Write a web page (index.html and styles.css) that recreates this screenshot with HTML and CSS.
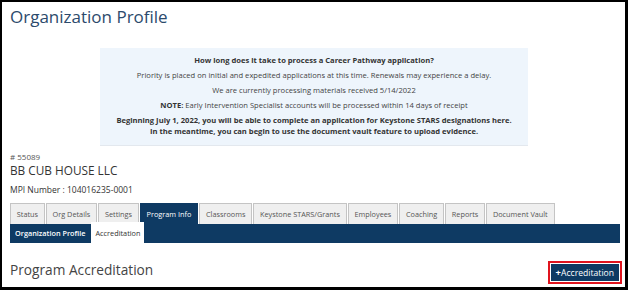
FILE: index.html
```html
<!DOCTYPE html>
<html>
<head>
	<meta charset="utf-8">
	<title>Organization Profile</title>
	<link rel="stylesheet" href="styles.css">
</head>
<body>
	<div class="frame">
		<h1 class="page-title">Organization Profile</h1>

		<div class="notice">
			<p class="strong">How long does it take to process a Career Pathway application?</p>
			<p>Priority is placed on initial and expedited applications at this time. Renewals may experience a delay.</p>
			<p>We are currently processing materials received 5/14/2022</p>
			<p><b>NOTE:</b> Early Intervention Specialist accounts will be processed within 14 days of receipt</p>
			<p class="strong">Beginning July 1, 2022, you will be able to complete an application for Keystone STARS designations here.<br>In the meantime, you can begin to use the document vault feature to upload evidence.</p>
		</div>

		<div class="org">
			<div class="org-id"># 55089</div>
			<div class="org-name">BB CUB HOUSE LLC</div>
			<div class="org-mpi">MPI Number : 104016235-0001</div>
		</div>

		<ul class="tabs">
			<li>Status</li>
			<li>Org Details</li>
			<li>Settings</li>
			<li class="active">Program Info</li>
			<li>Classrooms</li>
			<li>Keystone STARS/Grants</li>
			<li>Employees</li>
			<li>Coaching</li>
			<li>Reports</li>
			<li>Document Vault</li>
		</ul>
		<div class="subnav">
			<span class="subnav-item">Organization Profile</span>
			<span class="subnav-item active">Accreditation</span>
		</div>

		<div class="section-head">
			<h2>Program Accreditation</h2>
			<button class="add-btn"><b>+</b>Accreditation</button>
		</div>
	</div>
</body>
</html>
```

FILE: styles.css
```css
html, body {
	margin: 0;
	padding: 0;
	background: #fff;
	font-family: 'Open Sans', 'Liberation Sans', sans-serif;
	color: #333;
}
.frame {
	width: 628px;
	height: 290px;
	box-sizing: border-box;
	border: 2px solid #000;
	border-right-width: 3px;
	border-bottom-width: 3px;
	padding: 0 5px 0 8px;
	overflow: hidden;
}
.page-title {
	margin: 0;
	padding-top: 4px;
	font-size: 17px;
	line-height: 22px;
	font-weight: 400;
	color: #2c4a6c;
}

/* notice box */
.notice {
	width: 428px;
	box-sizing: border-box;
	margin: 20px 0 0 90px;
	padding: 7px 4px 8px;
	background: #eef5fc;
	border-bottom: 1px solid #e3e8ee;
	text-align: center;
	font-size: 7.6px;
	line-height: 11px;
	color: #444;
}
.notice p {
	margin: 0 0 4px;
}
.notice p:last-child {
	margin-bottom: 0;
}
.notice .strong, .notice b {
	font-weight: 700;
	color: #333;
}

/* organization */
.org-id {
	margin-top: 5px;
	font-size: 8px;
	line-height: 11px;
	color: #555;
}
.org-name {
	font-size: 11.8px;
	line-height: 16px;
	color: #333;
}
.org-mpi {
	margin-top: 7px;
	font-size: 8.5px;
	line-height: 10px;
	color: #333;
}

/* tabs */
.tabs {
	display: flex;
	gap: 1px;
	list-style: none;
	margin: 8px 0 0;
	padding: 0;
}
.tabs li {
	height: 21px;
	box-sizing: border-box;
	padding: 0 5.8px;
	border: 1px solid #c4c4c4;
	border-bottom: none;
	background: #efefef;
	font-size: 7.3px;
	line-height: 20px;
	color: #555;
}
.tabs li.active {
	background: #0e3a63;
	border-color: #0e3a63;
	color: #fff;
}
.subnav {
	display: flex;
	height: 19px;
	padding-left: 2px;
	gap: 3px;
	background: #0e3a63;
}
.subnav-item {
	padding: 0 3px;
	font-size: 7.3px;
	font-weight: 600;
	line-height: 19px;
	color: #fff;
}
.subnav-item.active {
	margin-top: -2px;
	height: 21px;
	line-height: 23px;
	padding: 0 4px;
	background: #fff;
	font-weight: 400;
	color: #333;
}

/* section */
.section-head {
	display: flex;
	justify-content: space-between;
	align-items: flex-end;
	margin-top: 17px;
}
.section-head h2 {
	margin: 0;
	font-size: 13.7px;
	line-height: 20px;
	font-weight: 400;
	color: #444;
}
.add-btn {
	height: 17px;
	margin: 0 1px -1px 0;
	padding: 0 5px;
	border: none;
	background: #0e3a63;
	color: #fff;
	font-family: inherit;
	font-size: 8.6px;
	line-height: 17px;
	outline: 2px solid #e0141e;
	outline-offset: 1px;
}
.add-btn b {
	font-size: 9.5px;
}
```
